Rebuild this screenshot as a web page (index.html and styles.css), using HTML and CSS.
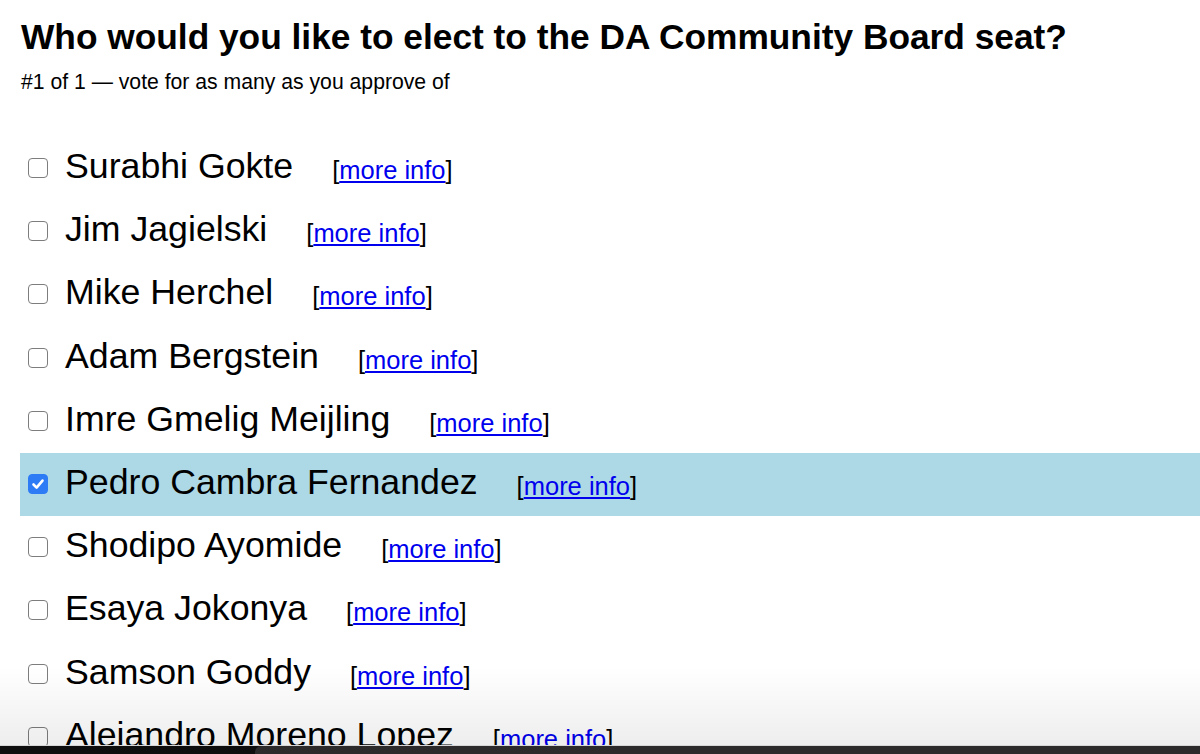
FILE: index.html
```html
<!DOCTYPE html>
<html lang="en">
<head>
<meta charset="utf-8">
<title>Vote</title>
<link rel="stylesheet" href="styles.css">
</head>
<body>
<main class="page">
  <h1 class="title">Who would you like to elect to the DA Community Board seat?</h1>
  <p class="subtitle">#1 of 1 — vote for as many as you approve of</p>
  <div class="list">
    <label class="row"><span class="box"></span><span class="name">Surabhi Gokte</span><span class="more">[<a href="#">more info</a>]</span></label>
    <label class="row"><span class="box"></span><span class="name">Jim Jagielski</span><span class="more">[<a href="#">more info</a>]</span></label>
    <label class="row"><span class="box"></span><span class="name">Mike Herchel</span><span class="more">[<a href="#">more info</a>]</span></label>
    <label class="row"><span class="box"></span><span class="name">Adam Bergstein</span><span class="more">[<a href="#">more info</a>]</span></label>
    <label class="row"><span class="box"></span><span class="name">Imre Gmelig Meijling</span><span class="more">[<a href="#">more info</a>]</span></label>
    <label class="row selected"><span class="box checked"><svg viewBox="0 0 20 20" width="20" height="20"><path d="M5.5 10.5 L8.6 13.6 L14.5 6.6" fill="none" stroke="#fff" stroke-width="2.6" stroke-linecap="round" stroke-linejoin="round"/></svg></span><span class="name">Pedro Cambra Fernandez</span><span class="more">[<a href="#">more info</a>]</span></label>
    <label class="row"><span class="box"></span><span class="name">Shodipo Ayomide</span><span class="more">[<a href="#">more info</a>]</span></label>
    <label class="row"><span class="box"></span><span class="name">Esaya Jokonya</span><span class="more">[<a href="#">more info</a>]</span></label>
    <label class="row"><span class="box"></span><span class="name">Samson Goddy</span><span class="more">[<a href="#">more info</a>]</span></label>
    <label class="row"><span class="box"></span><span class="name">Alejandro Moreno Lopez</span><span class="more">[<a href="#">more info</a>]</span></label>
  </div>
</main>
<div class="shade"></div>
<div class="dock"><span class="dock-left"></span><span class="dock-right"></span></div>
</body>
</html>
```

FILE: styles.css
```css
html, body {
  margin: 0;
  padding: 0;
  background: #fff;
}
body {
  font-family: "Liberation Sans", Arial, sans-serif;
  color: #000;
  overflow: hidden;
  height: 754px;
}
.page {
  padding: 0 0 0 20px;
}
.title {
  margin: 0;
  padding: 17px 0 0 1px;
  font-size: 35.3px;
  line-height: 40px;
  font-weight: bold;
}
.subtitle {
  margin: 13px 0 0 1px;
  font-size: 21.2px;
  line-height: 24px;
}
.list {
  margin-top: 43px;
  display: flex;
  flex-direction: column;
}
.row {
  display: flex;
  align-items: flex-start;
  height: 63.2px;
  padding-left: 8px;
  box-sizing: border-box;
}
.row.selected {
  background: #add8e6;
}
.box {
  width: 20px;
  height: 20px;
  box-sizing: border-box;
  margin-top: 21px;
  border: 1px solid #7d7d7d;
  border-radius: 4px;
  background: #fff;
  flex: none;
  display: flex;
}
.box.checked {
  background: #2d7cf6;
  border-color: #2d7cf6;
}
.box.checked svg {
  margin: -1px;
}
.name {
  margin: 9px 0 0 17px;
  font-size: 35.7px;
  line-height: 40px;
  white-space: nowrap;
}
.more {
  margin: 18px 0 0 39px;
  font-size: 25.5px;
  line-height: 30px;
  white-space: nowrap;
}
.more a {
  color: #0000ee;
  text-decoration: underline;
}
.shade {
  position: fixed;
  left: 0;
  right: 0;
  bottom: 7px;
  height: 80px;
  background: linear-gradient(to bottom, rgba(0,0,0,0), rgba(0,0,0,0.07));
  pointer-events: none;
}
.dock {
  position: fixed;
  left: 0;
  right: 0;
  bottom: 0;
  height: 8px;
  display: flex;
  border-top: 1px solid #d6d6d6;
  background: #0e0e0e;
}
.dock-left {
  width: 255px;
  background: #0e0e0e;
}
.dock-right {
  flex: 1;
  background: #2c2a2b;
  border-top-left-radius: 6px;
}
```
